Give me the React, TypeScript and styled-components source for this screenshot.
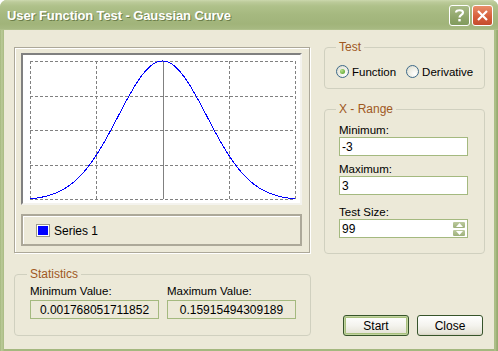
import React from 'react'
import styled, { createGlobalStyle, css } from 'styled-components'

const GlobalStyle = createGlobalStyle`
  html, body {
    margin: 0;
    padding: 0;
    background: #ffffff;
  }
  body {
    font-family: "Liberation Sans", Arial, sans-serif;
    font-size: 11px;
    color: #000;
  }
`

const Window = styled.div`
  width: 498px;
  height: 351px;
  box-sizing: border-box;
  display: flex;
  flex-direction: column;
  border-radius: 7px 7px 0 0;
  overflow: hidden;
  background: linear-gradient(90deg, #9cb075 0, #b9c996 1px, #b3c48f 3px, #a5b87f 4px, #a5b87f 494px, #b3c48f 495px, #98ac71 497px);
`

const TitleBar = styled.div`
  height: 30px;
  flex: none;
  display: flex;
  align-items: center;
  padding: 1px 5px 0 7px;
  box-sizing: border-box;
  background: linear-gradient(180deg, #cbd8ad 0, #bccb9a 2px, #afc18a 6px, #a6b980 14px, #a1b47a 24px, #a7b982 29px, #b6c692 30px);
`

const TitleText = styled.div`
  flex: 1;
  color: #ffffff;
  font-weight: bold;
  font-size: 13px;
  letter-spacing: -0.1px;
  text-shadow: 1px 1px 0 #6d7f4a;
`

const CaptionButton = styled.div<{ $kind: 'help' | 'close' }>`
  width: 21px;
  height: 21px;
  box-sizing: border-box;
  border: 1px solid #ffffff;
  border-radius: 3px;
  margin-left: 2px;
  display: flex;
  align-items: center;
  justify-content: center;
  color: #ffffff;
  ${p => p.$kind === 'help'
    ? css`background: linear-gradient(180deg, #a9bb87 0, #8fa56a 60%, #819b5d 100%);`
    : css`background: linear-gradient(180deg, #e98f6a 0, #d7603c 55%, #c44d2c 100%);`}
`

const Client = styled.div`
  flex: 1;
  margin: 0 4px 3px 4px;
  background: #ece9d8;
  display: flex;
  gap: 13px;
  padding: 10px 9px 13px 10px;
  box-sizing: border-box;
`

const LeftCol = styled.div`
  width: 297px;
  display: flex;
  flex-direction: column;
  padding-top: 7px;
`

const RightCol = styled.div`
  width: 161px;
  display: flex;
  flex-direction: column;
`

const ChartFrame = styled.div`
  flex: none;
  height: 206px;
  width: 296px;
  box-sizing: border-box;
  border: 1px solid #aca899;
  box-shadow: inset 1px 1px 0 #ffffff, 1px 1px 0 #ffffff;
  padding: 5px 7px 6px 6px;
  display: flex;
  flex-direction: column;
  gap: 9px;
`

const Plot = styled.div`
  flex: none;
  height: 152px;
  box-sizing: border-box;
  background: #ffffff;
  border-top: 2px solid #808080;
  border-left: 2px solid #808080;
  border-right: 2px solid #f4f3ee;
  border-bottom: 2px solid #f4f3ee;
  display: flex;
`

const Legend = styled.div`
  flex: none;
  height: 32px;
  box-sizing: border-box;
  border: 2px solid #aca899;
  box-shadow: inset 1px 1px 0 #ffffff;
  display: flex;
  align-items: center;
  gap: 4px;
  padding: 1px 0 0 13px;
  font-size: 12px;
`

const Swatch = styled.span`
  width: 14px;
  height: 13px;
  box-sizing: border-box;
  border: 1px solid #9c9a8c;
  background: #0000ff;
  box-shadow: inset 0 0 0 1px #ffffff;
`

const Group = styled.fieldset<{ $h: number }>`
  margin: 0;
  flex: none;
  height: ${p => p.$h}px;
  box-sizing: border-box;
  border: 1px solid #d0d0bf;
  border-radius: 4px;
  padding: 2px 11px 0 14px;
  min-width: 0;
`

const GroupTitle = styled.legend`
  color: #a0581e;
  font-size: 12px;
  line-height: 13px;
  padding: 0 3px;
  margin-left: -3px;
`

const RadioRow = styled.div`
  display: flex;
  align-items: center;
  padding-top: 9px;
  margin-left: -3px;
  font-size: 11.5px;
`

const RadioItem = styled.label`
  display: flex;
  align-items: center;
  gap: 3px;
  margin-right: 10px;
`

const RadioCircle = styled.span<{ $on?: boolean }>`
  width: 13px;
  height: 13px;
  box-sizing: border-box;
  border-radius: 50%;
  border: 1px solid #3d6a8a;
  background: radial-gradient(circle at 70% 70%, #ffffff 0, #eaeadf 60%, #d4d3c6 100%);
  display: flex;
  align-items: center;
  justify-content: center;
  &::after {
    content: '';
    width: 5px;
    height: 5px;
    border-radius: 50%;
    background: ${p => (p.$on ? 'radial-gradient(circle at 35% 35%, #b5e08b, #4e9a1c)' : 'transparent')};
  }
`

const FieldLabel = styled.div<{ $gap: number }>`
  font-size: 11.5px;
  line-height: 13px;
  margin-top: ${p => p.$gap}px;
`

const FieldBox = styled.div`
  width: 129px;
  height: 19px;
  box-sizing: border-box;
  border: 1px solid #a4b97f;
  background: #ffffff;
  display: flex;
  align-items: center;
  padding-left: 2px;
  font-size: 12px;
`

const FieldText = styled.span`
  flex: 1;
`

const Spinner = styled.div`
  width: 14px;
  height: 16px;
  display: flex;
  flex-direction: column;
  margin-right: 1px;
`

const SpinPart = styled.div`
  flex: 1;
  display: flex;
  align-items: center;
  justify-content: center;
  border: 1px solid #ffffff;
  border-radius: 2px;
  background: linear-gradient(180deg, #bdcb9f 0, #9db07a 100%);
`

const StatsGroup = styled(Group)`
  margin-top: 15px;
  width: 297px;
  padding: 0 0 0 15px;
`

const StatsRow = styled.div`
  display: flex;
  gap: 8px;
`

const StatCell = styled.div`
  display: flex;
  flex-direction: column;
  width: 129px;
`

const StatLabel = styled.div`
  font-size: 11.5px;
  line-height: 13px;
  margin-top: 4px;
`

const StatValue = styled.div`
  height: 19px;
  margin-top: 2px;
  box-sizing: border-box;
  border: 1px solid #a4b97f;
  display: flex;
  align-items: center;
  justify-content: center;
  font-size: 12px;
`

const ButtonRow = styled.div`
  margin-top: auto;
  display: flex;
  gap: 8px;
  padding-left: 19px;
`

const Button = styled.div<{ $default?: boolean }>`
  width: 66px;
  height: 21px;
  box-sizing: border-box;
  border: 1px solid #37542b;
  border-radius: 3px;
  display: flex;
  align-items: center;
  justify-content: center;
  font-size: 12px;
  background: linear-gradient(180deg, #ffffff 0, #f4f3ee 50%, #e6e4d8 90%, #d6d2c2 100%);
  ${p => p.$default && css`
    box-shadow: inset 0 0 0 1px #c2d4a0, inset 0 0 0 2px #a8c07e;
  `}
`

const PLOT_W = 277
const PLOT_H = 148
const X0 = 7
const X1 = 272
const Y0 = 6
const Y1 = 144

const gauss = (x: number) => Math.exp(-x * x / 2) / Math.sqrt(2 * Math.PI)

const curvePath = () => {
  const n = 99
  const fmin = gauss(3)
  const fmax = gauss(0)
  const pts: string[] = []
  for (let i = 0; i < n; i++) {
    const x = -3 + (6 * i) / (n - 1)
    const px = X0 + ((x + 3) / 6) * (X1 - X0)
    const py = Y1 - ((gauss(x) - fmin) / (fmax - fmin)) * (Y1 - Y0)
    pts.push(`${i === 0 ? 'M' : 'L'}${px.toFixed(1)},${py.toFixed(1)}`)
  }
  return pts.join(' ')
}

const GaussChart = () => {
  const cols = [0, 1, 2, 3, 4].map(i => X0 + ((X1 - X0) * i) / 4)
  const rows = [0, 1, 2, 3, 4].map(i => Y0 + ((Y1 - Y0) * i) / 4)
  return (
    <svg width={PLOT_W} height={PLOT_H} shapeRendering="crispEdges">
      {cols.map((x, i) => (
        <line key={'c' + i} x1={Math.round(x) + 0.5} x2={Math.round(x) + 0.5} y1={Y0} y2={Y1}
          stroke="#808080" strokeDasharray={i === 2 ? undefined : '3 2'} />
      ))}
      {rows.map((y, i) => (
        <line key={'r' + i} x1={X0} x2={X1} y1={Math.round(y) + 0.5} y2={Math.round(y) + 0.5}
          stroke="#808080" strokeDasharray="3 2" />
      ))}
      <path d={curvePath()} fill="none" stroke="#0000ff" strokeWidth={1} />
    </svg>
  )
}

const App = () => (
  <>
    <GlobalStyle />
    <Window>
      <TitleBar>
        <TitleText>User Function Test - Gaussian Curve</TitleText>
        <CaptionButton $kind="help">
          <svg width="13" height="15" viewBox="0 0 13 15">
            <path d="M3 4.5 C3 1.5 10 1.5 10 4.5 C10 7 6.5 6.8 6.5 9.5" fill="none" stroke="#fff" strokeWidth="2.2" />
            <rect x="5.3" y="11" width="2.4" height="2.4" fill="#fff" />
          </svg>
        </CaptionButton>
        <CaptionButton $kind="close">
          <svg width="13" height="13" viewBox="0 0 13 13">
            <path d="M2 2 L11 11 M11 2 L2 11" stroke="#fff" strokeWidth="2.2" />
          </svg>
        </CaptionButton>
      </TitleBar>
      <Client>
        <LeftCol>
          <ChartFrame>
            <Plot>
              <GaussChart />
            </Plot>
            <Legend>
              <Swatch />
              <span>Series 1</span>
            </Legend>
          </ChartFrame>
          <StatsGroup $h={68}>
            <GroupTitle>Statistics</GroupTitle>
            <StatsRow>
              <StatCell>
                <StatLabel>Minimum Value:</StatLabel>
                <StatValue>0.001768051711852</StatValue>
              </StatCell>
              <StatCell>
                <StatLabel>Maximum Value:</StatLabel>
                <StatValue>0.15915494309189</StatValue>
              </StatCell>
            </StatsRow>
          </StatsGroup>
        </LeftCol>
        <RightCol>
          <Group $h={48} style={{ marginTop: 1 }}>
            <GroupTitle>Test</GroupTitle>
            <RadioRow>
              <RadioItem><RadioCircle $on />Function</RadioItem>
              <RadioItem><RadioCircle />Derivative</RadioItem>
            </RadioRow>
          </Group>
          <Group $h={151} style={{ marginTop: 14 }}>
            <GroupTitle>X - Range</GroupTitle>
            <FieldLabel $gap={6}>Minimum:</FieldLabel>
            <FieldBox><FieldText>-3</FieldText></FieldBox>
            <FieldLabel $gap={7}>Maximum:</FieldLabel>
            <FieldBox><FieldText>3</FieldText></FieldBox>
            <FieldLabel $gap={11}>Test Size:</FieldLabel>
            <FieldBox>
              <FieldText>99</FieldText>
              <Spinner>
                <SpinPart>
                  <svg width="7" height="4" viewBox="0 0 7 4"><path d="M0 4 L3.5 0 L7 4 Z" fill="#fff" /></svg>
                </SpinPart>
                <SpinPart>
                  <svg width="7" height="4" viewBox="0 0 7 4"><path d="M0 0 L3.5 4 L7 0 Z" fill="#fff" /></svg>
                </SpinPart>
              </Spinner>
            </FieldBox>
          </Group>
          <ButtonRow>
            <Button $default>Start</Button>
            <Button>Close</Button>
          </ButtonRow>
        </RightCol>
      </Client>
    </Window>
  </>
)

export default App
